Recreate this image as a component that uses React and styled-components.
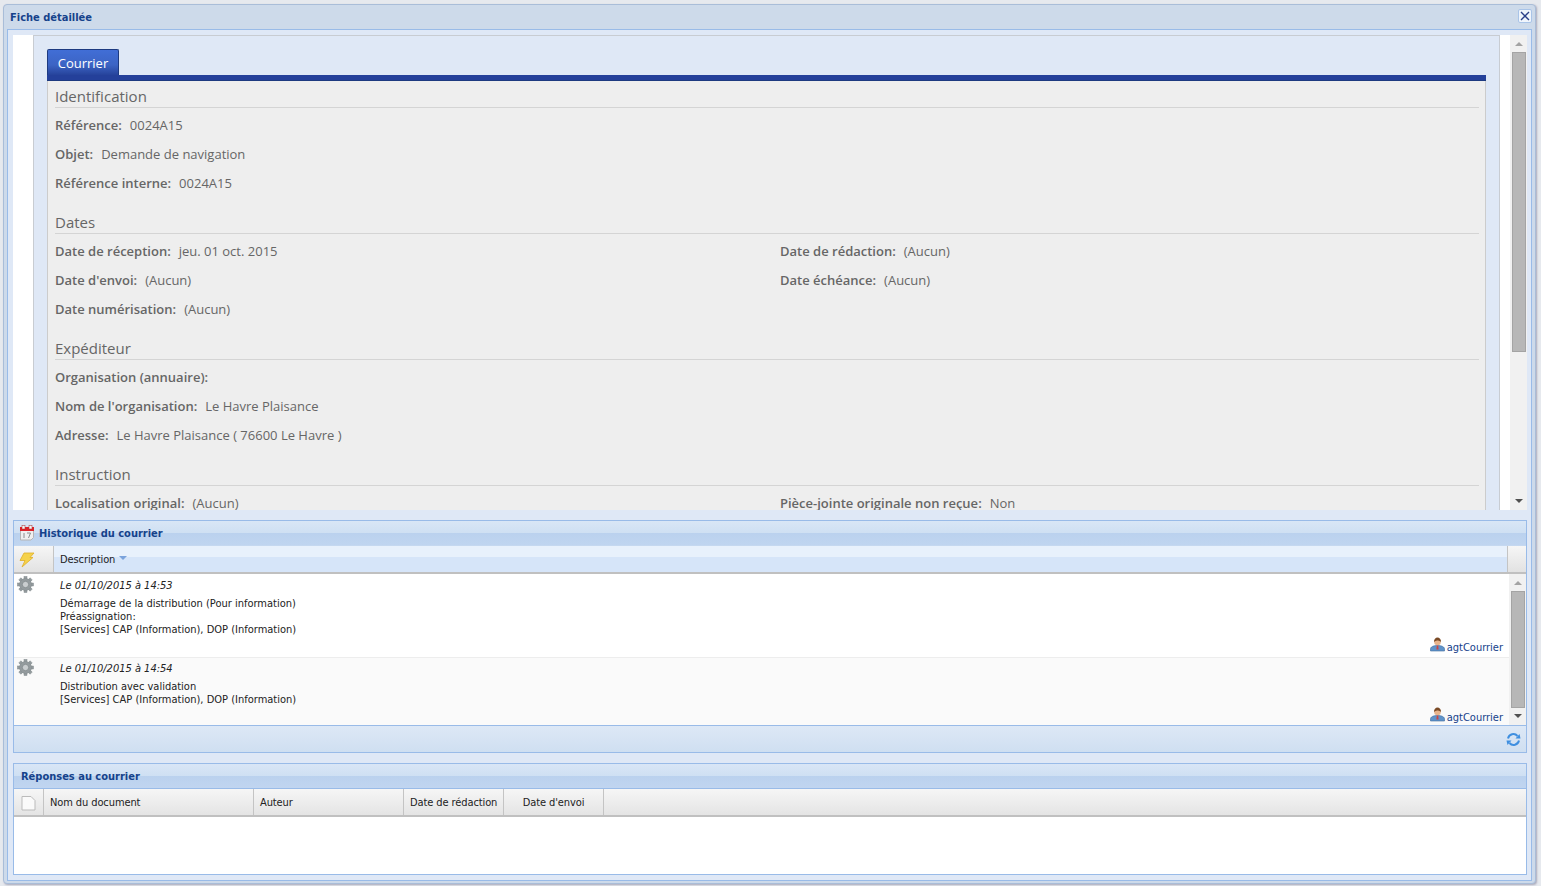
import React from 'react';
import styled, { createGlobalStyle } from 'styled-components';

const Global = createGlobalStyle`
  html, body { margin: 0; padding: 0; height: 100%; overflow: hidden; background: #e6e9ee; }
  * { box-sizing: border-box; }
`;
const tahoma = `"DejaVu Sans Condensed", "DejaVu Sans", sans-serif`;
const Page = styled.div`width: 1541px; height: 886px; padding: 4px 0 0 3px; font-family: "Open Sans", sans-serif;`;
const Win = styled.div`
  width: 1533px; height: 880px; border: 1px solid #a9bdd8; border-radius: 4px; background: #cddaea;
  box-shadow: 1px 1px 2px #aab; display: flex; flex-direction: column; padding: 0 3px 3px 3px;
`;
const WinHead = styled.div`
  height: 24px; flex: none; display: flex; align-items: center; justify-content: space-between;
  padding: 0 0 2px 3px; color: #15428b; font-size: 11px; font-weight: 700; font-family: ${tahoma}; font-stretch: condensed;
`;
const WinTitle = styled.span`padding-top: 2px;`;
const CloseBtn = styled.div`
  width: 14px; height: 14px; background: #f0f5fc; border: 1px solid #a9c4e8; border-radius: 2px;
  display: flex; align-items: center; justify-content: center;
`;
const WinBody = styled.div`
  flex: 1; border: 1px solid #99bbe8; background: #dfe8f6; padding: 5px 4px 5px 5px;
  display: flex; flex-direction: column;
`;
const Top = styled.div`height: 475px; flex: none; display: flex; overflow: hidden;`;
const Gutter = styled.div`width: 20px; flex: none; background: #fff;`;
const Frame = styled.div`
  width: 1467px; flex: none; border-left: 1px solid #c8ccd2; border-right: 1px solid #c8ccd2; border-top: 1px solid #c8ccd2;
  background: #dfe8f6; padding: 13px 13px 0 13px; overflow: hidden;
`;
const WhiteGap = styled.div`width: 10px; flex: none; background: #fff;`;
const Scroll = styled.div`
  width: ${p => p.$w}px; flex: none; background: #f1f1f1; display: flex; flex-direction: column; align-items: center;
  padding-top: ${p => p.$pt}px;
`;
const Arrow = styled.div`
  width: 0; height: 0; border-left: 4px solid transparent; border-right: 4px solid transparent;
  ${p => p.$down ? 'border-top: 4px solid #505050;' : 'border-bottom: 4px solid #a3a3a3;'}
`;
const Thumb = styled.div`
  width: 14px; height: ${p => p.$h}px; background: #b7b7b7; border: 1px solid #a4a4a4; margin: ${p => p.$mt}px 0 ${p => p.$mb}px;
`;
const Tab = styled.div`
  width: 72px; height: 26px; border: 1px solid #1d3a80; border-bottom: none; border-radius: 2px 2px 0 0;
  background: linear-gradient(#416ed6, #3c64c4 60%, #26439b); color: #fff; font-size: 13px;
  display: flex; align-items: center; justify-content: center;
`;
const TabBar = styled.div`height: 6px; background: #24409a; border-bottom: 1px solid #1d3a80;`;
const Form = styled.div`
  background: #eee; border-left: 1px solid #ccc; border-right: 1px solid #ccc; padding: 5px 6px 0 7px; color: #666; font-size: 13px;
`;
const Section = styled.div`margin-bottom: 15px;`;
const SectionTitle = styled.div`
  font-size: 15px; line-height: 20px; height: 22px; color: #666; border-bottom: 1px solid #d4d4d4; margin-bottom: 2px;
`;
const Fields = styled.div`display: grid; grid-template-columns: 725px 1fr; grid-auto-rows: 29px;`;
const Field = styled.div`display: flex; align-items: center; gap: 8px; white-space: nowrap; grid-column: ${p => p.$col || 'auto'};`;
const Label = styled.span`font-weight: 600;`;
const Spacer = styled.div`height: 10px; flex: none;`;
const Panel = styled.div`
  flex: none; height: ${p => p.$h}px; border: 1px solid #99bbe8; display: flex; flex-direction: column; background: #fff;
`;
const PanelHead = styled.div`
  height: ${p => p.$h}px; flex: none; display: flex; align-items: center; gap: 4px; padding: 0 0 0 ${p => p.$pl}px;
  background: linear-gradient(#d9e6f6 0, #cfe0f3 48%, #bad1ee 48%, #c0d5f0 100%);
  font-family: ${tahoma}; font-stretch: condensed; font-size: 11px; font-weight: 700; color: #15428b;
`;
const ColHead = styled.div`
  height: ${p => p.$h}px; flex: none; display: flex; border-top: 1px solid ${p => p.$blue ? '#c5d8f0' : '#99bbe8'}; border-bottom: 2px solid #c0c0c0;
  background: ${p => p.$blue ? 'linear-gradient(#e8f1fc 0, #e8f1fc 42%, #d6e5f9 42%, #d6e5f9 100%)' : 'linear-gradient(#f6f6f6, #e4e4e4)'};
`;
const ColCell = styled.div`
  width: ${p => p.$w}px; flex: ${p => p.$grow ? 1 : 'none'}; display: flex; align-items: center; justify-content: ${p => p.$center ? 'center' : 'flex-start'};
  padding: 1px 0 0 ${p => p.$pl ?? 6}px; border-right: ${p => p.$noline ? 'none' : '1px solid #c4c4c4'};
  font-family: ${tahoma}; font-stretch: condensed; font-size: 11px; letter-spacing: -0.1px; color: #222;
  ${p => p.$gray && 'background: linear-gradient(#f6f6f6, #e2e2e2);'}
`;
const SortMark = styled.span`
  display: inline-block; width: 0; height: 0; border-left: 4px solid transparent; border-right: 4px solid transparent;
  border-top: 4px solid #7ba3dc; margin: 0 0 3px 4px;
`;
const GridBody = styled.div`flex: 1; display: flex; min-height: 0;`;
const Rows = styled.div`flex: 1; display: flex; flex-direction: column;`;
const Row = styled.div`
  height: ${p => p.$h}px; flex: none; position: relative; display: flex; background: ${p => p.$alt ? '#fafafa' : '#fff'};
  border-bottom: ${p => p.$alt ? 'none' : '1px solid #ededed'};
`;
const RowIcon = styled.div`width: 46px; flex: none; padding: ${p => p.$pt}px 0 0 3px;`;
const RowText = styled.div`font-family: ${tahoma}; font-stretch: condensed; font-size: 11px; line-height: 13px; color: #222;`;
const RowDate = styled.div`font-style: italic; margin: ${p => p.$mt}px 0 5px; height: 13px;`;
const Author = styled.div`
  position: absolute; right: 6px; bottom: ${p => p.$b}px; display: flex; align-items: flex-end; gap: 2px; color: #15428b;
  font-family: ${tahoma}; font-stretch: condensed; font-size: 11px; line-height: 13px;
  svg { margin-bottom: 2px; }
`;
const Toolbar = styled.div`
  height: 27px; flex: none; border-top: 1px solid #99bbe8; background: linear-gradient(#dde8f6, #cfdff1);
  display: flex; justify-content: flex-end; align-items: center; padding: 0 5px 0 0;
`;

const Cross = () => <svg width="10" height="10" viewBox="0 0 10 10"><path d="M1 1l8 8M9 1l-8 8" stroke="#2a3f88" strokeWidth="1.4" /></svg>;
const Calendar = () => (
  <svg width="16" height="16" viewBox="0 0 16 16">
    <path d="M1.500 5.500h13v7l-2.500 2.500h-10.500z" fill="#efefef" stroke="#b5b5b5" />
    <rect x="1" y="2" width="14" height="4" fill="#dc2228" />
    <rect x="3" y="0.500" width="3" height="3.500" fill="#f4f4f4" stroke="#a33" strokeWidth=".5" />
    <rect x="10" y="0.500" width="3" height="3.500" fill="#f4f4f4" stroke="#a33" strokeWidth=".5" />
    <path d="M5 8v5M8 8h3.500l-2 5" stroke="#8c8c8c" fill="none" />
  </svg>
);
const Bolt = () => <svg width="16" height="16" viewBox="0 0 16 16"><path d="M5 1h10l-4 4.500h3L3 15l3-6.500H1z" fill="#f5d24a" stroke="#dfae2a" strokeWidth=".8" /></svg>;
const Gear = () => (
  <svg width="17" height="17" viewBox="0 0 17 17">
    <g fill="#949b9e" stroke="#828a8d" strokeWidth=".5">
      {[0, 45, 90, 135, 180, 225, 270, 315].map(a => <rect key={a} x="7" y="0.500" width="3" height="4" transform={`rotate(${a} 8.500 8.500)`} />)}
      <circle cx="8.500" cy="8.500" r="6" />
    </g>
    <circle cx="8.500" cy="8.500" r="3.200" fill="#c9cdcf" stroke="#7f8689" strokeWidth=".8" />
  </svg>
);
const User = () => (
  <svg width="15" height="15" viewBox="0 0 15 15">
    <path d="M0.500 14v-2c0-2 2.500-3.500 7-3.500s7 1.500 7 3.500v2z" fill="#5f93c9" stroke="#3f6b9e" strokeWidth=".6" />
    <circle cx="7.500" cy="5" r="3.300" fill="#e7b48c" />
    <path d="M4 5c0-3 1.500-4.500 3.500-4.500S11 2 11 5C10 3.500 8 3.500 7 3.500S5 4 4 5z" fill="#7a4a25" />
    <path d="M6.800 8.500h1.400l.4 4h-2.200z" fill="#c44" />
  </svg>
);
const Refresh = () => (
  <svg width="15" height="15" viewBox="0 0 15 15" fill="none" stroke="#3f8fe0" strokeWidth="2">
    <path d="M2 6.500a5.500 5.500 0 0 1 9.500-2.500" /><path d="M13 8.500a5.500 5.500 0 0 1-9.500 2.500" />
    <path d="M14.500 6.500h-5l4-4.500z" fill="#3f8fe0" stroke="none" /><path d="M0.500 8.500h5l-4 4.500z" fill="#3f8fe0" stroke="none" />
  </svg>
);
const Doc = () => <svg width="15" height="16" viewBox="0 0 15 16"><path d="M1 1.500h9l4 4V15H1z" fill="#fafafa" stroke="#bbb" /></svg>;

const F = ({ l, v, col }) => <Field $col={col}><Label>{l}:</Label>{v && <span>{v}</span>}</Field>;

export default function App() {
  return (
    <Page>
      <Global />
      <Win>
        <WinHead><WinTitle>Fiche détaillée</WinTitle><CloseBtn><Cross /></CloseBtn></WinHead>
        <WinBody>
          <Top>
            <Gutter />
            <Frame>
              <Tab>Courrier</Tab>
              <TabBar />
              <Form>
                <Section>
                  <SectionTitle>Identification</SectionTitle>
                  <Fields>
                    <F l="Référence" v="0024A15" col="1 / 3" />
                    <F l="Objet" v="Demande de navigation" col="1 / 3" />
                    <F l="Référence interne" v="0024A15" col="1 / 3" />
                  </Fields>
                </Section>
                <Section>
                  <SectionTitle>Dates</SectionTitle>
                  <Fields>
                    <F l="Date de réception" v="jeu. 01 oct. 2015" />
                    <F l="Date de rédaction" v="(Aucun)" />
                    <F l="Date d'envoi" v="(Aucun)" />
                    <F l="Date échéance" v="(Aucun)" />
                    <F l="Date numérisation" v="(Aucun)" />
                  </Fields>
                </Section>
                <Section>
                  <SectionTitle>Expéditeur</SectionTitle>
                  <Fields>
                    <F l="Organisation (annuaire)" col="1 / 3" />
                    <F l="Nom de l'organisation" v="Le Havre Plaisance" col="1 / 3" />
                    <F l="Adresse" v="Le Havre Plaisance ( 76600 Le Havre )" col="1 / 3" />
                  </Fields>
                </Section>
                <Section>
                  <SectionTitle>Instruction</SectionTitle>
                  <Fields>
                    <F l="Localisation original" v="(Aucun)" />
                    <F l="Pièce-jointe originale non reçue" v="Non" />
                  </Fields>
                </Section>
              </Form>
            </Frame>
            <WhiteGap />
            <Scroll $w={17} $pt={7}>
              <Arrow />
              <Thumb $h={300} $mt={6} $mb={147} />
              <Arrow $down />
            </Scroll>
          </Top>
          <Spacer />
          <Panel $h={233}>
            <PanelHead $h={24} $pl={5}><Calendar />Historique du courrier</PanelHead>
            <ColHead $h={29} $blue>
              <ColCell $w={40} $gray $pl={5}><Bolt /></ColCell>
              <ColCell $grow $pl={6} $w={0}>Description<SortMark /></ColCell>
              <ColCell $w={18} $gray $noline $pl={0} />
            </ColHead>
            <GridBody>
              <Rows>
                <Row $h={84}>
                  <RowIcon $pt={2}><Gear /></RowIcon>
                  <RowText>
                    <RowDate $mt={5}>Le 01/10/2015 à 14:53</RowDate>
                    Démarrage de la distribution (Pour information)<br />
                    Préassignation:<br />
                    [Services] CAP (Information), DOP (Information)
                  </RowText>
                  <Author $b={3}><User />agtCourrier</Author>
                </Row>
                <Row $h={67} $alt>
                  <RowIcon $pt={1}><Gear /></RowIcon>
                  <RowText>
                    <RowDate $mt={4}>Le 01/10/2015 à 14:54</RowDate>
                    Distribution avec validation<br />
                    [Services] CAP (Information), DOP (Information)
                  </RowText>
                  <Author $b={1}><User />agtCourrier</Author>
                </Row>
              </Rows>
              <Scroll $w={17} $pt={7}>
                <Arrow />
                <Thumb $h={117} $mt={6} $mb={6} />
                <Arrow $down />
              </Scroll>
            </GridBody>
            <Toolbar><Refresh /></Toolbar>
          </Panel>
          <Spacer />
          <Panel $h={112}>
            <PanelHead $h={24} $pl={7}>Réponses au courrier</PanelHead>
            <ColHead $h={29}>
              <ColCell $w={30} $center $pl={0}><Doc /></ColCell>
              <ColCell $w={210}>Nom du document</ColCell>
              <ColCell $w={150}>Auteur</ColCell>
              <ColCell $w={100}>Date de rédaction</ColCell>
              <ColCell $w={100} $center $pl={0}>Date d'envoi</ColCell>
            </ColHead>
          </Panel>
        </WinBody>
      </Win>
    </Page>
  );
}
